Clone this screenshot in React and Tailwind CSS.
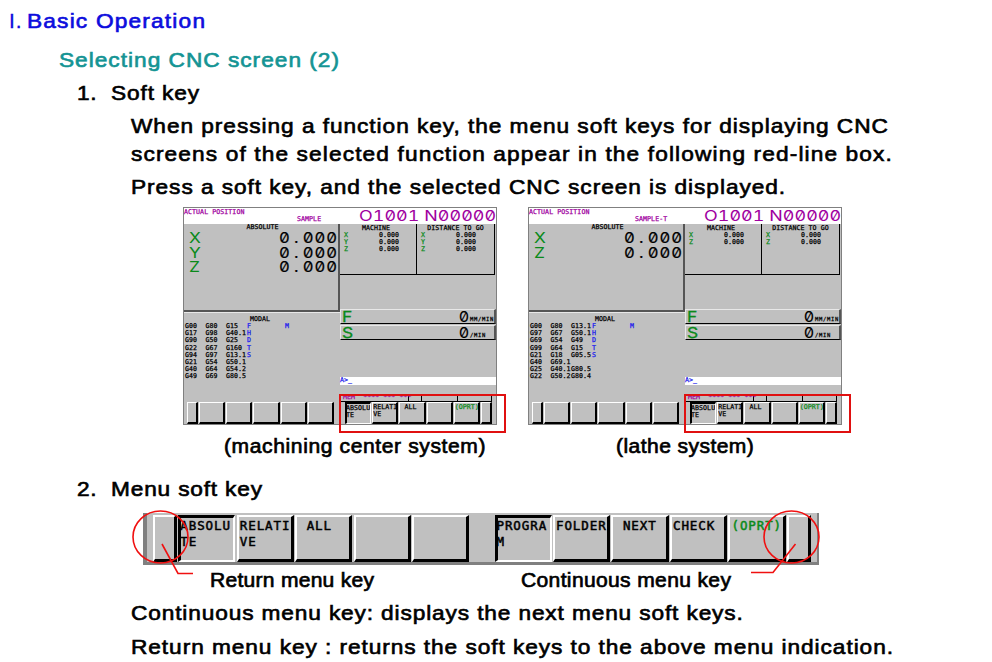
import React from "react";

const TINY = "font-['DejaVu_Sans_Mono',monospace] text-[6.6px] tracking-[0.06px] leading-[7px] [-webkit-text-stroke:0.25px_currentColor] whitespace-pre";
const LCD = "font-['Inter',sans-serif] [font-feature-settings:'zero','tnum'] whitespace-nowrap";
const LINE = "leading-[28px] h-7 whitespace-nowrap [-webkit-text-stroke:0.65px_currentColor] origin-left scale-x-[1.08]";
const BODY = `${LINE} text-[21px]`;
const CAPTION = `${LINE} text-[19.5px]`;

const mill = {
  name: "SAMPLE",
  nameMargin: "ml-[113px]",
  axes: ["X", "Y", "Z"],
  codes: [
    ["G00", "G80", "G15"],
    ["G17", "G98", "G40.1"],
    ["G90", "G50", "G25"],
    ["G22", "G67", "G160"],
    ["G94", "G97", "G13.1"],
    ["G21", "G54", "G50.1"],
    ["G40", "G64", "G54.2"],
    ["G49", "G69", "G80.5"],
  ],
};

const lathe = {
  name: "SAMPLE-T",
  nameMargin: "ml-[106px]",
  axes: ["X", "Z"],
  codes: [
    ["G00", "G80", "G13.1"],
    ["G97", "G67", "G50.1"],
    ["G69", "G54", "G49"],
    ["G99", "G64", "G15"],
    ["G21", "G18", "G05.5"],
    ["G40", "G69.1", ""],
    ["G25", "G40.1", "G80.5"],
    ["G22", "G50.2", "G80.4"],
  ],
};

function Readout({ axes, title, wide }) {
  return (
    <div className={`${wide ? "w-[78px]" : "w-[77px]"} h-[51px] border-r-[1.5px] border-b-[1.5px] border-black pt-px shrink-0`}>
      <div className={`${TINY} text-black text-center`}>{title}</div>
      {axes.map((a) => (
        <div key={a} className={`${TINY} flex h-[7.2px] items-center`}>
          <span className="w-[39px] pl-1 text-[#0a8a1a]">{a}</span>
          <span className="text-black">0.000</span>
        </div>
      ))}
    </div>
  );
}

function Feed({ label, unit }) {
  return (
    <div className="flex h-[15px] items-center border-t border-l border-t-[#e8e8e8] border-l-[#e8e8e8] border-b border-b-black border-r-2 border-r-[#555] pl-px">
      <span className={`${LCD} text-[14.5px] leading-[13px] text-[#0a8a1a] w-5 [-webkit-text-stroke:0.3px_currentColor]`}>
        <span className="inline-block origin-left scale-x-[1.2]">{label}</span>
      </span>
      <span className={`${LCD} ml-auto text-[14px] leading-[13px] text-black [-webkit-text-stroke:0.1px_#000] origin-right scale-x-[1.15] mr-px`}>0</span>
      <span className="font-['DejaVu_Sans_Mono',monospace] text-[5.5px] leading-[5px] text-black [-webkit-text-stroke:0.25px_#000] self-end mb-px tracking-[0.7px] w-[24px]">{unit}</span>
    </div>
  );
}

function SmallKey({ width, pressed, children, green }) {
  const bevel = pressed
    ? "border-t-[2px] border-l-[2px] border-black border-b border-r border-b-white border-r-white"
    : "border-t border-l border-t-white border-l-white border-b-[2px] border-r-[2px] border-b-black border-r-black";
  return (
    <div className={`${width} ${bevel} h-[22px] shrink-0 overflow-hidden pt-px`}>
      <div className={`${TINY} ${pressed ? "-ml-px" : ""} ${green ? "text-[#0a8a1a]" : "text-black"}`}>{children}</div>
    </div>
  );
}

function Screen({ data }) {
  return (
    <div className="relative w-[314px] h-[218px] shrink-0 bg-[#c0c0c0] border border-[#808080] flex flex-col">
      <div className="flex h-4 bg-white text-[#a000a0] shrink-0">
        <div className="flex-1 pt-px">
          <div className={TINY}>ACTUAL POSITION</div>
          <div className={`${TINY} ${data.nameMargin}`}>{data.name}</div>
        </div>
        <div className={`${LCD} text-[14px] leading-4 w-[137px]`}>
          <span className="inline-block origin-left scale-x-[1.28] tracking-[0.04px]">O1001 N00000</span>
        </div>
      </div>
      <div className="flex flex-1">
        <div className="w-[156px] flex flex-col">
          <div className="h-[88px] border-r-2 border-b-2 border-[#555] shrink-0">
            <div className={`${TINY} text-black text-center pl-[3px]`}>ABSOLUTE</div>
            {data.axes.map((a) => (
              <div key={a} className={`${LCD} flex h-[14.5px] items-center text-[14.5px] leading-[14px] pl-[5px]`}>
                <span className="inline-block w-[90px] text-[#0a8a1a]">
                  <span className="inline-block origin-left scale-x-[1.2]">{a}</span>
                </span>
                <span className="inline-block origin-left scale-x-[1.15] text-black tracking-[0.85px] [-webkit-text-stroke:0.15px_#000]">
                  0<span className="inline-block w-[10.3px] text-center">.</span>000
                </span>
              </div>
            ))}
          </div>
          <div className="h-[90px] shrink-0 border-t border-[#e8e8e8] pt-[3px]">
            <div className={`${TINY} text-black pl-[66px]`}>MODAL</div>
            {data.codes.map((row, i) => (
              <div key={i} className={`${TINY} flex h-[7.2px] items-center pl-px text-black`}>
                <span className="w-[20.5px]">{row[0]}</span>
                <span className="w-[20.5px]">{row[1]}</span>
                <span className="w-[21px]">{row[2]}</span>
                <span className="w-[38px] text-[#1a1aee]">{"FHDTS"[i] || ""}</span>
                <span className="text-[#1a1aee]">{i === 0 ? "M" : ""}</span>
              </div>
            ))}
          </div>
          <div className="flex gap-px pl-[3px]">
            <SmallKey width="w-[11px]" />
            {[0, 1, 2, 3, 4].map((k) => (
              <SmallKey key={k} width="w-[26.2px]" />
            ))}
          </div>
        </div>
        <div className="w-[156px] flex flex-col">
          <div className="flex shrink-0">
            <Readout axes={data.axes} title="MACHINE " />
            <Readout axes={data.axes} title="DISTANCE TO GO" wide />
          </div>
          <div className="mt-[34px] flex flex-col gap-px">
            <Feed label="F" unit="MM/MIN" />
            <Feed label="S" unit="/MIN" />
          </div>
          <div className="mt-[37px] h-2 bg-white shrink-0">
            <div className={`${TINY} text-[#1a1aee]`}>A&gt;_</div>
          </div>
          <div className="mt-[9px] ml-px mr-[4px] h-[8px] border-b border-black flex shrink-0">
            <div className={`${TINY} w-[68px] pl-[2px] text-[#a000a0] border-r border-black`}>MEM  **** *** ***</div>
            <div className="w-[13px] border-r border-black" />
            <div className="w-[36px] border-r border-black" />
            <div className="flex-1 border-r border-black" />
          </div>
          <div className="flex gap-px pl-[5px] shrink-0">
            <SmallKey width="w-[26.2px]" pressed>ABSOLU<br />TE</SmallKey>
            <SmallKey width="w-[26.2px]">RELATI<br />VE</SmallKey>
            <SmallKey width="w-[26.2px]"> ALL</SmallKey>
            <SmallKey width="w-[26.2px]" />
            <SmallKey width="w-[26.2px]" green>(OPRT)</SmallKey>
            <SmallKey width="w-[11px]" />
          </div>
        </div>
      </div>
      <div className="absolute left-[155px] top-[186px] w-[167px] h-[39px] border-2 border-[#e01010]" />
    </div>
  );
}

function Key({ width, pressed, green, children }) {
  const bevel = pressed
    ? "border-t-[3px] border-l-[3px] border-t-black border-l-black border-b-2 border-r-2 border-b-white border-r-white"
    : "border-t-2 border-l-2 border-t-white border-l-white border-b-[3px] border-r-[3px] border-b-black border-r-black";
  return (
    <div className={`${width} ${bevel} ${pressed ? "pt-0" : "pt-px"} h-[47px] shrink-0`}>
      <div
        className={`font-['DejaVu_Sans_Mono',monospace] text-[12.5px] leading-4 tracking-[0.9px] whitespace-pre [-webkit-text-stroke:0.5px_currentColor] ${
          pressed ? "-ml-px" : "ml-px"
        } ${green ? "text-[#0a8a1a]" : "text-black"}`}
      >
        {children}
      </div>
    </div>
  );
}

export default function App() {
  return (
    <div className="relative w-[992px] h-[662px] overflow-hidden bg-white font-['Liberation_Sans',Arial,sans-serif] text-black">
      <div className="flex pl-[9px] pt-[7px] text-[#0d0ddd]">
        <div className="h-7 w-[18px] text-[21px] leading-[28px] tracking-[1px] [-webkit-text-stroke:0.3px_currentColor]">I.</div>
        <div className={`${BODY} tracking-[1.1px]`}>Basic Operation</div>
      </div>
      <div className={`${BODY} mt-[11px] ml-[58.5px] tracking-[0.92px] text-[#149494]`}>Selecting CNC screen (2)</div>
      <div className="mt-[5px] flex pl-[77px]">
        <div className={`${BODY} w-[33.5px] tracking-[0.5px]`}>1.</div>
        <div className={`${BODY} tracking-[0.8px]`}>Soft key</div>
      </div>
      <div className="mt-[5px] ml-[130.5px] w-[720px]">
        <div className={`${BODY} tracking-[0.88px]`}>When pressing a function key, the menu soft keys for displaying CNC</div>
        <div className={`${BODY} tracking-[1.04px]`}>screens of the selected function appear in the following red-line box.</div>
        <div className={`${BODY} mt-[5px] tracking-[0.87px]`}>Press a soft key, and the selected CNC screen is displayed.</div>
      </div>

      <div className="mt-[6px] flex gap-[31px] pl-[183px]">
        <Screen data={mill} />
        <Screen data={lathe} />
      </div>
      <div className="mt-[7px] flex pl-[224px]">
        <div className={`${CAPTION} w-[392px] tracking-[0.56px]`}>(machining center system)</div>
        <div className={`${CAPTION} tracking-[0.4px]`}>(lathe system)</div>
      </div>
      <div className="mt-[15px] flex pl-[77px]">
        <div className={`${BODY} w-[33.5px] tracking-[0.5px]`}>2.</div>
        <div className={`${BODY} tracking-[0.76px]`}>Menu soft key</div>
      </div>

      <div className="relative mt-[10px] ml-[143px] w-[676px]">
        <div className="h-[52px] border-l-4 border-b-[3px] border-r-2 border-[#808080] bg-[#c0c0c0] pt-[2px] pl-[6px] flex gap-[1.3px]">
          <Key width="w-[24px]" />
          <Key width="w-[57.2px]" pressed>ABSOLU<br />TE</Key>
          <Key width="w-[57.2px]">RELATI<br />VE</Key>
          <Key width="w-[57.2px]"> ALL</Key>
          <Key width="w-[57.2px]" />
          <Key width="w-[57.2px]" />
          <div className="w-[22.5px] shrink-0" />
          <Key width="w-[57.2px]" pressed>PROGRA<br />M</Key>
          <Key width="w-[57.2px]">FOLDER</Key>
          <Key width="w-[57.2px]"> NEXT</Key>
          <Key width="w-[57.2px]">CHECK</Key>
          <Key width="w-[57.2px]" green>(OPRT)</Key>
          <Key width="w-[24px]" />
        </div>
        <svg className="absolute -left-[13px] -top-[8px]" width="700" height="72" viewBox="130 505 700 72" fill="none" stroke="#f01010" strokeWidth="1.6">
          <ellipse cx="160.500" cy="537" rx="27.500" ry="26" />
          <path d="M162 544 L178 573.500 H193" />
          <ellipse cx="791.500" cy="537" rx="27.500" ry="26" />
          <path d="M795.500 544 L773 572.500 H751" />
        </svg>
      </div>
      <div className="mt-px flex pl-[210px]">
        <div className={`${CAPTION} w-[311px] tracking-[0.24px]`}>Return menu key</div>
        <div className={`${CAPTION} tracking-[0.32px]`}>Continuous menu key</div>
      </div>
      <div className="mt-[5px] ml-[130.5px] w-[720px]">
        <div className={`${BODY} tracking-[0.8px]`}>Continuous menu key: displays the next menu soft keys.</div>
        <div className={`${BODY} mt-[6px] tracking-[0.866px]`}>Return menu key : returns the soft keys to the above menu indication.</div>
      </div>
    </div>
  );
}
